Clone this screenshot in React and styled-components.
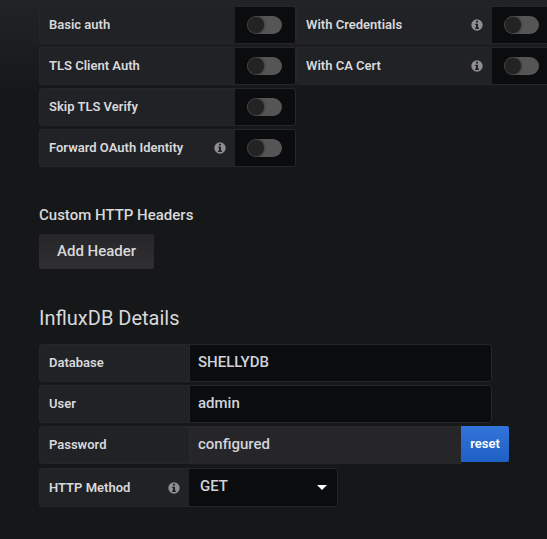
import React from "react";
import styled, { createGlobalStyle } from "styled-components";

const GlobalStyle = createGlobalStyle`
  * { box-sizing: border-box; }
  html { background: #161719; }
  body {
    margin: 0;
    font-family: Roboto, "Liberation Sans", sans-serif;
    color: #d8d9da;
    overflow-x: hidden;
  }
  button, input, select { font-family: inherit; }
`;

const Page = styled.main`
  min-height: 100vh;
  padding: 6px 0 24px 39px;
  overflow: hidden;
  background: linear-gradient(180deg, #222326 0, #161719 94px);
`;

const Form = styled.form`
  display: flex;
  flex-direction: column;
  align-items: flex-start;
`;

const Rows = styled.div`
  display: flex;
  flex-direction: column;
  gap: 3px;
  width: 100%;
`;

const Row = styled.div`
  display: flex;
  align-items: flex-start;
`;

const Label = styled.label`
  display: flex;
  flex: none;
  align-items: center;
  justify-content: space-between;
  width: ${(p) => (p.$wide ? "196px" : "150px")};
  height: ${(p) => (p.$tall ? "39px" : "38px")};
  padding: 0 9px;
  background: #212226;
  border: 1px solid #262628;
  border-right: 0;
  border-radius: 3px 0 0 3px;
  font-size: 13px;
  font-weight: 600;
  line-height: 16px;
  white-space: nowrap;
`;

const SwitchCell = styled.span`
  display: flex;
  flex: none;
  align-items: center;
  width: 61px;
  height: 38px;
  padding-left: 12px;
  background: #0b0c0e;
  border: 1px solid #262628;
  border-left: 0;
  border-radius: 0 3px 3px 0;
`;

const Toggle = styled.input`
  appearance: none;
  display: flex;
  align-items: center;
  width: 35px;
  height: 18px;
  margin: 0;
  border-radius: 9px;
  background: #555556;
  cursor: pointer;

  &::before {
    content: "";
    width: 16px;
    height: 16px;
    margin-left: 1px;
    border-radius: 50%;
    background: #232324;
    box-shadow: 0 0 3px #202020;
  }

  &:checked {
    justify-content: flex-end;
    background: #33a2e5;
  }
`;

const Info = styled.svg`
  width: 12px;
  height: 12px;
  color: #8e8e90;
`;

const SubHeading = styled.h3`
  margin: 37px 0 8px;
  font-size: 15px;
  font-weight: 500;
  line-height: 22px;
`;

const Heading = styled.h2`
  margin: 36px 0 13px;
  font-size: 20px;
  font-weight: 400;
  line-height: 26px;
`;

const AddButton = styled.button`
  height: 35px;
  padding: 0 18px 2px;
  border: 0;
  border-radius: 2px;
  background: linear-gradient(180deg, #262628, #303032);
  color: #d8d9da;
  font-size: 15px;
  font-weight: 500;
  cursor: pointer;
`;

const TextInput = styled.input`
  flex: 0 1 ${(p) => (p.$short ? "272px" : "303px")};
  min-width: 0;
  height: 38px;
  padding: 0 8px 2px;
  background: ${(p) => (p.disabled ? "#262628" : "#0b0c0e")};
  border: 1px solid ${(p) => (p.disabled ? "#29292b" : "#262628")};
  border-radius: ${(p) => (p.$short ? "0" : "0 3px 3px 0")};
  color: #d0d4da;
  font-size: 15px;
  font-weight: 500;
`;

const ResetButton = styled.button`
  flex: none;
  width: 48px;
  height: 36px;
  padding: 0 0 2px;
  border: 0;
  border-radius: 0 2px 2px 0;
  background: linear-gradient(180deg, #3274d9, #1f60c4);
  color: #fff;
  font-size: 13px;
  font-weight: 600;
  cursor: pointer;
`;

const SelectBox = styled.div`
  display: grid;
  align-items: center;
  width: 149px;
`;

const Select = styled.select`
  grid-area: 1 / 1;
  appearance: none;
  width: 100%;
  height: 39px;
  padding: 0 32px 4px 11px;
  background: #0b0c0e;
  border: 1px solid #262628;
  border-left: 0;
  border-radius: 0 3px 3px 0;
  color: #d0d4da;
  font-size: 15px;
  font-weight: 500;
`;

const Caret = styled.svg`
  grid-area: 1 / 1;
  justify-self: end;
  width: 10px;
  height: 5px;
  margin-right: 11px;
  fill: #fff;
  pointer-events: none;
`;

const MethodRow = styled(Row)`
  margin-top: 1px;
`;

function InfoIcon() {
  return (
    <Info viewBox="0 0 12 12" aria-hidden="true">
      <circle cx="6" cy="6" r="5.7" fill="currentColor" />
      <path d="M5 1.8h2v1.8H5zM4.2 4.7H7v3.8h.9V10H4.1V8.500H5V6.100h-.8z" fill="#212226" />
    </Info>
  );
}

function SwitchField({ id, label, info }) {
  return (
    <>
      <Label htmlFor={id} $wide>
        {label}
        {info && <InfoIcon />}
      </Label>
      <SwitchCell>
        <Toggle id={id} type="checkbox" role="switch" />
      </SwitchCell>
    </>
  );
}

export default function App() {
  return (
    <Page>
      <GlobalStyle />
      <Form onSubmit={(e) => e.preventDefault()}>
        <Rows>
          <Row>
            <SwitchField id="basic-auth" label="Basic auth" />
            <SwitchField id="with-credentials" label="With Credentials" info />
          </Row>
          <Row>
            <SwitchField id="tls-client-auth" label="TLS Client Auth" />
            <SwitchField id="with-ca-cert" label="With CA Cert" info />
          </Row>
          <Row>
            <SwitchField id="skip-tls" label="Skip TLS Verify" />
          </Row>
          <Row>
            <SwitchField id="forward-oauth" label="Forward OAuth Identity" info />
          </Row>
        </Rows>

        <SubHeading>Custom HTTP Headers</SubHeading>
        <AddButton type="button">Add Header</AddButton>

        <Heading>InfluxDB Details</Heading>
        <Rows>
          <Row>
            <Label htmlFor="database">Database</Label>
            <TextInput id="database" defaultValue="SHELLYDB" />
          </Row>
          <Row>
            <Label htmlFor="user">User</Label>
            <TextInput id="user" defaultValue="admin" />
          </Row>
          <Row>
            <Label htmlFor="password">Password</Label>
            <TextInput id="password" defaultValue="configured" disabled $short />
            <ResetButton type="button">reset</ResetButton>
          </Row>
          <MethodRow>
            <Label htmlFor="method" $tall>
              HTTP Method
              <InfoIcon />
            </Label>
            <SelectBox>
              <Select id="method" defaultValue="GET">
                <option>GET</option>
                <option>POST</option>
              </Select>
              <Caret viewBox="0 0 10 5" aria-hidden="true">
                <path d="M0 0h10L5 5z" />
              </Caret>
            </SelectBox>
          </MethodRow>
        </Rows>
      </Form>
    </Page>
  );
}
